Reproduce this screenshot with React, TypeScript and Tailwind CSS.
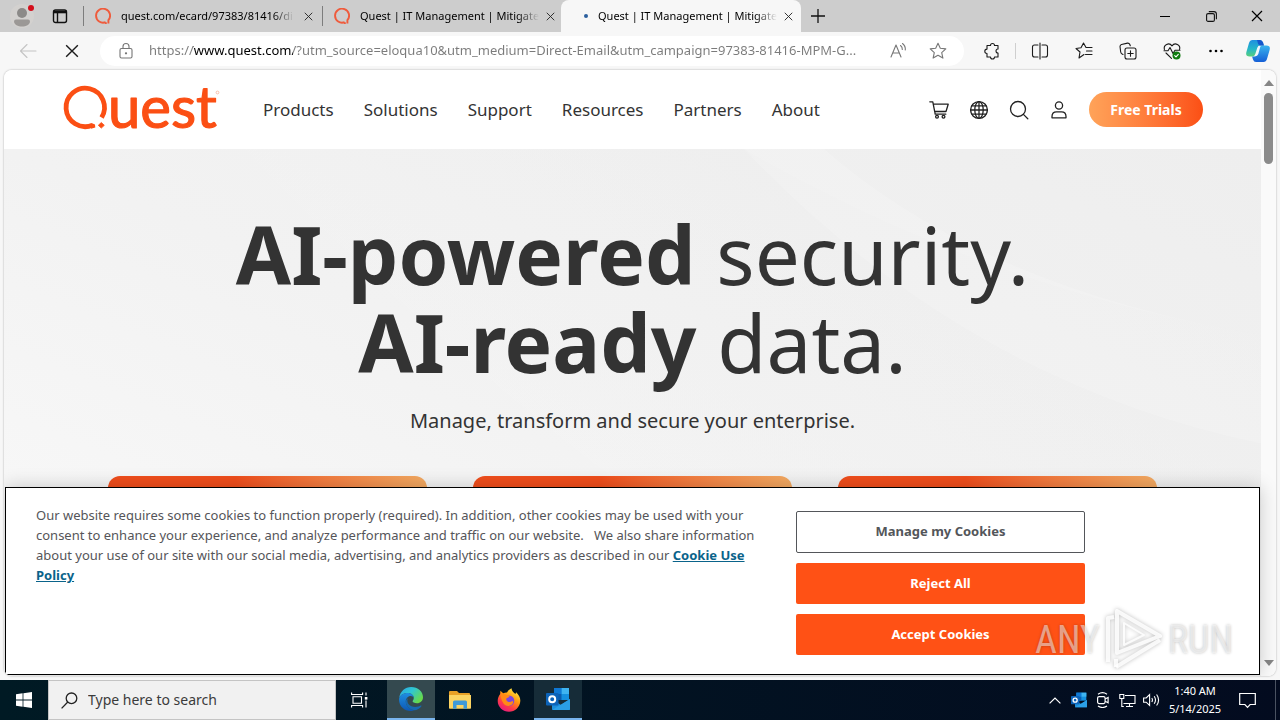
import type { ReactNode } from "react";

function QuestMark({ className }: { className?: string }) {
  return (
    <svg viewBox="0 0 16 16" className={className} fill="none" stroke="#ef5b3c" strokeWidth="1.9" aria-hidden="true">
      <path d="M10.6 14.2A7 7 0 1 1 13.4 12.2V15.6" />
      <path d="M9.8 15.2h2" />
    </svg>
  );
}

function CloseIcon({ className }: { className?: string }) {
  return (
    <svg viewBox="0 0 12 12" className={className} fill="none" stroke="currentColor" strokeWidth="1.2" aria-hidden="true">
      <path d="M1 1l10 10M11 1L1 11" />
    </svg>
  );
}

function Line({ children, className = "size-5" }: { children: ReactNode; className?: string }) {
  return (
    <svg
      viewBox="0 0 20 20"
      className={className}
      fill="none"
      stroke="currentColor"
      strokeWidth="1.1"
      strokeLinecap="round"
      strokeLinejoin="round"
      aria-hidden="true"
    >
      {children}
    </svg>
  );
}

function Tab({ title, active, icon }: { title: string; active?: boolean; icon: ReactNode }) {
  return (
    <div
      className={
        active
          ? "flex h-8 w-60 items-center rounded-t-lg bg-[#f7f7f7] pr-1.5 pl-[17px]"
          : "flex h-8 w-[238px] items-center pr-1 pl-[11px]"
      }
    >
      <span className="flex w-4 shrink-0 items-center justify-center">{icon}</span>
      <button
        type="button"
        className={
          active
            ? "ml-1 flex-1 bg-[linear-gradient(90deg,#000_88%,#0000_100%)] bg-clip-text text-left text-[11px] whitespace-nowrap text-transparent"
            : "ml-[10px] flex-1 bg-[linear-gradient(90deg,#000_88%,#0000_100%)] bg-clip-text text-left text-[11px] whitespace-nowrap text-transparent"
        }
      >
        {title}
      </button>
      <button type="button" aria-label="Close tab" className="ml-1 flex size-5 items-center justify-center text-[#222]">
        <CloseIcon className="size-[9px]" />
      </button>
    </div>
  );
}

function TabStrip() {
  return (
    <div className="flex h-8 shrink-0 items-center bg-[#cdcdcd]">
      <button type="button" aria-label="Profile" className="ml-2.5 size-6">
        <svg viewBox="0 0 24 24" className="size-6" aria-hidden="true">
          <circle cx="12" cy="12" r="12" fill="#d3d1cf" />
          <circle cx="12" cy="9" r="5" fill="#8c8a88" />
          <path d="M4 17.6q0-2 2-2h12q2 0 2 2c0 3-4 5-8 5s-8-2-8-5z" fill="#9b9896" />
          <circle cx="21" cy="4" r="3" fill="#d40f1c" />
        </svg>
      </button>
      <button type="button" aria-label="Tab actions" className="ml-4 flex size-5 items-center justify-center">
        <svg viewBox="0 0 16 16" className="size-4" fill="none" stroke="#111" strokeWidth="1.4" aria-hidden="true">
          <rect x="1.5" y="2" width="13" height="12.5" rx="2" />
          <path d="M1.5 4h13" strokeWidth="2.6" />
          <path d="M5.5 4v10" />
        </svg>
      </button>
      <div className="ml-[13px] h-5 w-px bg-[#7d7d7d]" />
      <Tab title="quest.com/ecard/97383/81416/di" icon={<QuestMark className="size-4" />} />
      <div className="h-5 w-px bg-[#7d7d7d]" />
      <Tab title="Quest | IT Management | Mitigate" icon={<QuestMark className="size-4" />} />
      <Tab active title="Quest | IT Management | Mitigate" icon={<span className="size-1 rounded-full bg-[#2b5f9e]" />} />
      <button type="button" aria-label="New tab" className="ml-[7px] flex size-5 items-center justify-center">
        <svg viewBox="0 0 14 14" className="size-3.5" stroke="#111" strokeWidth="1.3" aria-hidden="true">
          <path d="M7 0v14M0 7h14" />
        </svg>
      </button>
      <div className="ml-auto flex">
        <button type="button" aria-label="Minimize" className="flex h-8 w-[46px] items-center justify-center">
          <span className="h-px w-2.5 bg-black" />
        </button>
        <button type="button" aria-label="Restore" className="flex h-8 w-[46px] items-center justify-center">
          <svg viewBox="0 0 11 11" className="size-[11px]" fill="none" stroke="#111" strokeWidth="1.1" aria-hidden="true">
            <rect x="0.6" y="2.6" width="7.8" height="7.8" rx="1.5" />
            <path d="M2.8.6h5.2q2.4 0 2.4 2.4v5.2" />
          </svg>
        </button>
        <button type="button" aria-label="Close" className="flex h-8 w-[46px] items-center justify-center">
          <CloseIcon className="size-3" />
        </button>
      </div>
    </div>
  );
}

function ToolButton({ label, children }: { label: string; children: ReactNode }) {
  return (
    <button type="button" aria-label={label} className="flex h-8 w-11 items-center justify-center text-[#1b1b1b]">
      {children}
    </button>
  );
}

function Toolbar() {
  return (
    <div className="flex h-[38px] shrink-0 items-center bg-[#f7f7f7] pl-1.5">
      <button type="button" aria-label="Back" className="flex h-8 w-11 items-center justify-center text-[#c4c4c4]">
        <Line>
          <path d="M18 10H2.5M9 3.500L2.500 10l6.500 6.500" />
        </Line>
      </button>
      <ToolButton label="Stop">
        <CloseIcon className="size-3.5" />
      </ToolButton>
      <div className="ml-1.5 flex h-[30px] flex-1 items-center rounded-full bg-white pl-4 text-[#767676]">
        <Line>
          <rect x="4" y="7.5" width="12" height="9.500" rx="1.500" />
          <path d="M7 7.500V5.500a3 3 0 0 1 6 0v2" />
          <circle cx="10" cy="12.300" r=".6" fill="currentColor" />
        </Line>
        <input
          type="text"
          aria-label="Address"
          readOnly
          className="ml-[13px] min-w-0 flex-1 bg-[linear-gradient(90deg,#7b7b7b_44px,#000_44px,#000_144px,#7b7b7b_144px)] bg-clip-text text-[13px] text-transparent outline-none"
          value="https://www.quest.com/?utm_source=eloqua10&utm_medium=Direct-Email&utm_campaign=97383-81416-MPM-G..."
        />
        <button type="button" aria-label="Read aloud" className="flex h-7 w-10 items-center justify-center">
          <Line>
            <path d="M3 16L8 4l5 12M4.800 12h6.500M12.500 4.500q2 1.500 1.800 4M14.500 2.500q3.200 2.500 2.800 6.500" />
          </Line>
        </button>
        <button type="button" aria-label="Add to favorites" className="mr-1.5 flex h-7 w-10 items-center justify-center">
          <Line>
            <path d="M10 2.200l2.300 5.100 5.500.6-4.100 3.700 1.200 5.500L10 14.300l-4.900 2.800 1.200-5.500-4.100-3.700 5.500-.6z" />
          </Line>
        </button>
      </div>
      <div className="ml-1.5 flex items-center">
        <ToolButton label="Extensions">
          <Line>
            <path d="M7 4.500h1.500a2 2 0 0 1 4 0H16V8a2 2 0 0 0 0 4v4h-3.500a2 2 0 0 1-4 0H5v-3.500a2.200 2.200 0 0 1 0-4.400V4.500z" />
          </Line>
        </ToolButton>
        <div className="mr-0.5 ml-px h-4 w-px bg-[#cfcfcf]" />
        <ToolButton label="Split screen">
          <Line>
            <path d="M10 2v16M8 4H4.500Q2.500 4 2.500 6v8q0 2 2 2H8M12 4h3.500q2 0 2 2v8q0 2-2 2H12" />
          </Line>
        </ToolButton>
        <ToolButton label="Favorites">
          <Line>
            <path d="M10 13.500l-5 3.500 1-6L2 7.500l5-.8L9.500 2 12 6.500h6M12.500 10H18M11.500 13.500H18" />
          </Line>
        </ToolButton>
        <ToolButton label="Collections">
          <Line>
            <rect x="7" y="7" width="11" height="11" rx="2" />
            <path d="M12.500 9.800v5.400M9.800 12.500h5.400M5 13.500l-.9-.4Q3 12.600 2.700 11L2 5.500Q2 4 3.500 3.500l6-1.400q1.600-.2 2.200 1.200l.6 1.500" />
          </Line>
        </ToolButton>
        <ToolButton label="Browser essentials">
          <Line>
            <path d="M2.400 8.500C1.200 4 7 .8 10 4.800c3-4 8.800-.8 7.600 3.700M4 12l5.500 5.300M2 9.800h4l2-3.300 3 6 2-3.200h5" />
            <circle cx="14.500" cy="14.500" r="4" fill="#107c10" stroke="none" />
            <path d="M12.700 14.600l1.300 1.200 2.300-2.500" stroke="#fff" />
          </Line>
        </ToolButton>
        <ToolButton label="Settings and more">
          <svg viewBox="0 0 16 4" className="h-1 w-4" aria-hidden="true">
            <circle cx="2.500" cy="2" r="1.300" />
            <circle cx="8" cy="2" r="1.300" />
            <circle cx="13.500" cy="2" r="1.300" />
          </svg>
        </ToolButton>
        <button type="button" aria-label="Copilot" className="mr-2.5 ml-2 size-6">
          <svg viewBox="0 0 24 24" className="size-6" aria-hidden="true">
            <defs>
              <linearGradient id="cpA" x1="0" y1="0" x2="0" y2="1">
                <stop offset="0" stopColor="#1f8fe0" />
                <stop offset=".55" stopColor="#25b7c8" />
                <stop offset="1" stopColor="#58cf7c" />
              </linearGradient>
              <linearGradient id="cpB" x1="0" y1="0" x2="0" y2="1">
                <stop offset="0" stopColor="#39b4ee" />
                <stop offset="1" stopColor="#155fd6" />
              </linearGradient>
            </defs>
            <path d="M6.500 1H14q2.200 0 3 2.500l.9 3H14q-2 0-2.700 2.200L9.300 15Q8.600 17.500 6 17.500H3.500Q-.8 17.500.4 13L3 4Q3.900 1 6.500 1z" fill="url(#cpA)" />
            <path d="M17.500 23H10q-2.200 0-3-2.500l-.9-3H8.500q2 0 2.700-2.200L13.200 9q.7-2.500 3.300-2.500h4q4.300 0 3.100 4.500L21 20q-.9 3-3.500 3z" fill="url(#cpB)" />
            <path d="M11 1h3q2.200 0 3 2.500l.9 3H14q-1.200 0-2-2z" fill="#1457cc" />
            <path d="M10.200 16l2-7q.8-2 2.300-2l-2.200 8q-.6 2-2.900 2.200z" fill="#eef7ff" />
          </svg>
        </button>
      </div>
    </div>
  );
}

function QuestLogo() {
  return (
    <a href="#home" aria-label="Quest" className="block">
      <svg viewBox="0 0 158 48" className="h-12 w-[158px] overflow-visible" aria-hidden="true">
        <path d="M37.600 31.500A19.200 19.200 0 1 0 28.500 39.200" fill="none" stroke="#fb4f14" strokeWidth="4.800" />
        <path d="M27.500 37l3.500 1.500.3 3-4.300 1.200z" fill="#fb4f14" />
        <path d="M37.300 36.500l3 2.800-3 2.800-3-2.800z" fill="#fb4f14" stroke="#fb4f14" strokeWidth=".8" strokeLinejoin="round" />
        <text
          x="44"
          y="42"
          fontSize="58"
          fontFamily="Lato, sans-serif"
          fill="#fb4f14"
          stroke="#fb4f14"
          strokeWidth="1.200"
          strokeLinejoin="round"
        >
          uest
        </text>
        <circle cx="153.500" cy="6.500" r="1.400" fill="none" stroke="#f6b49a" strokeWidth=".8" />
      </svg>
    </a>
  );
}

const navItems = ["Products", "Solutions", "Support", "Resources", "Partners", "About"];

function SiteHeader() {
  return (
    <header className="flex h-[79px] items-center bg-white pr-[58px] pl-[60px]">
      <QuestLogo />
      <nav className="ml-[41px] flex gap-[30px] text-[17px] text-[#333]">
        {navItems.map((item) => (
          <a key={item} href={`#${item.toLowerCase()}`}>
            {item}
          </a>
        ))}
      </nav>
      <div className="ml-auto flex gap-5 text-[#222]">
        <button type="button" aria-label="Cart">
          <Line>
            <path d="M.8 1.800h3l2.400 12.400h10.600M4.500 4.200h14.700L17 11.500H5.600" strokeWidth="1.300" />
            <circle cx="8" cy="16.800" r="1.400" strokeWidth="1.300" />
            <circle cx="14.500" cy="16.800" r="1.400" strokeWidth="1.300" />
          </Line>
        </button>
        <button type="button" aria-label="Language">
          <Line>
            <circle cx="10" cy="10" r="8.400" strokeWidth="1.400" />
            <ellipse cx="10" cy="10" rx="4.200" ry="8.400" strokeWidth="1.300" />
            <path d="M10 1.600v16.800M1.600 10h16.800M2.900 5.800h14.200M2.900 14.200h14.200" strokeWidth="1.300" />
          </Line>
        </button>
        <button type="button" aria-label="Search">
          <Line>
            <circle cx="9" cy="9" r="7.500" strokeWidth="1.300" />
            <path d="M14.400 14.400L18.800 18.800" strokeWidth="1.300" />
          </Line>
        </button>
        <button type="button" aria-label="Account">
          <Line>
            <circle cx="10" cy="5.500" r="3.600" strokeWidth="1.300" />
            <path d="M3 17.800v-1.300Q3 11.800 7.500 11.800h5q4.500 0 4.500 4.700v1.300z" strokeWidth="1.300" />
          </Line>
        </button>
      </div>
      <a
        href="#trials"
        className="ml-5 flex h-[35px] w-[114px] items-center justify-center rounded-full bg-linear-to-r from-[#ffa359] to-[#fb4f14] text-sm font-bold text-white"
      >
        Free Trials
      </a>
    </header>
  );
}

function Hero() {
  return (
    <main className="relative flex-1 overflow-hidden bg-linear-to-tr from-[#fafafa] via-[#f2f2f2] to-[#eeeeee] text-[#333]">
      <svg viewBox="0 0 1257 340" preserveAspectRatio="none" className="absolute inset-0 h-full w-full" aria-hidden="true">
        <defs>
          <linearGradient id="wave" x1="0" y1="1" x2="1" y2="0">
            <stop offset="0" stopColor="#fff" stopOpacity=".1" />
            <stop offset="1" stopColor="#e6e6e6" stopOpacity=".4" />
          </linearGradient>
        </defs>
        <path d="M240 0Q520 190 900 340H1257V120Q980 90 740 0z" fill="url(#wave)" />
        <path d="M740 0Q960 150 1257 190V120Q980 90 820 0z" fill="#fff" fillOpacity=".15" />
      </svg>
      <div className="relative flex flex-col items-center pt-[61px]">
        <h1 className="text-center text-[80px] leading-[88px]">
          <strong className="font-bold">AI-powered</strong> security.
          <br />
          <strong className="font-bold">AI-ready</strong> data.
        </h1>
        <p className="mt-[19px] text-xl leading-8">Manage, transform and secure your enterprise.</p>
        <div className="mt-[39px] grid w-full grid-cols-3 gap-[46px] px-[104px]">
          {[0, 1, 2].map((card) => (
            <div key={card} className="h-40 rounded-t-xl bg-linear-to-r from-[#f04e1c] from-40% to-[#f3aa62]" />
          ))}
        </div>
      </div>
    </main>
  );
}

function CookieBanner() {
  return (
    <section
      aria-label="Cookie consent"
      className="absolute inset-x-px bottom-px flex border border-black bg-white pt-[23px] pb-[19px] pl-[30px] shadow-[0_0_18px_rgba(0,0,0,0.2)]"
    >
      <p className="-mt-1.5 w-[722px] text-[13px] leading-5 text-[#555559]">
        Our website requires some cookies to function properly (required). In addition, other cookies may be used with your
        consent to enhance your experience, and analyze performance and traffic on our website. &nbsp; We also share information
        about your use of our site with our social media, advertising, and analytics providers as described in our{" "}
        <a href="#cookies" className="font-bold text-[#0a638a] underline">
          Cookie Use Policy
        </a>
      </p>
      <div className="ml-[38px] flex w-[289px] flex-col gap-2.5 text-[13px] font-bold">
        <button type="button" className="h-[42px] rounded-xs border border-[#53565a] text-[#53565a]">
          Manage my Cookies
        </button>
        <button type="button" className="h-[41px] rounded-xs bg-[#ff5115] text-white">
          Reject All
        </button>
        <button type="button" className="h-[41px] rounded-xs bg-[#ff5115] text-white">
          Accept Cookies
        </button>
      </div>
    </section>
  );
}

function Watermark() {
  return (
    <div className="pointer-events-none absolute right-[43px] bottom-1 flex items-center gap-1 font-['Liberation_Sans_Narrow','Roboto_Condensed','Liberation_Sans',sans-serif] text-[38px] leading-none text-white/50 [text-shadow:0_0_3px_rgba(0,0,0,0.25)]">
      <span>ANY</span>
      <svg viewBox="0 0 60 64" className="h-16 w-[60px] drop-shadow-[0_0_2px_rgba(0,0,0,0.3)]" fill="none" stroke="#fff" strokeOpacity=".85" strokeWidth="4" strokeLinejoin="round" aria-hidden="true">
        <path d="M4 54V10l6-1M13 3v42L56 28z" />
        <path d="M20 15v22l20-10z" strokeWidth="2" />
        <path d="M12 59L56 32" />
        <path d="M12 59v-8" />
      </svg>
      <span>RUN</span>
    </div>
  );
}

function ScrollBar() {
  return (
    <div className="flex w-[15px] flex-col items-center bg-[#fafafa] pt-2.5 pb-2.5">
      <svg viewBox="0 0 10 6" className="h-1.5 w-2.5" fill="#868686" aria-hidden="true">
        <path d="M5 0l5 6H0z" />
      </svg>
      <div className="mt-[7px] h-[71px] w-[9px] rounded-full bg-[#8b8b8b]" />
      <svg viewBox="0 0 10 6" className="mt-auto h-1.5 w-2.5" fill="#868686" aria-hidden="true">
        <path d="M5 6l5-6H0z" />
      </svg>
    </div>
  );
}

function OutlookIcon({ className }: { className?: string }) {
  return (
    <svg viewBox="0 0 24 24" className={className} aria-hidden="true">
      <path d="M8 1h15v12H8z" fill="#1490df" />
      <path d="M15.500 1H23v6h-7.500z" fill="#3fb4f0" />
      <path d="M8 1h7.500v6H8z" fill="#0f78d4" />
      <path d="M8 7h7.500v6H8z" fill="#0a5cad" />
      <path d="M6 12l9 6 9-6v10q0 1-1 1H7q-1 0-1-1z" fill="#1c8fdc" />
      <path d="M6 23L24 12v10q0 1-1 1z" fill="#2b9fe6" />
      <rect x="0" y="6" width="12.500" height="12.500" rx="1" fill="#0c63b8" />
      <circle cx="6.200" cy="12.200" r="3" fill="none" stroke="#fff" strokeWidth="2" />
    </svg>
  );
}

function Taskbar() {
  return (
    <footer className="flex h-10 shrink-0 bg-linear-to-r from-[#001a24] to-[#030b1f] text-white">
      <button type="button" aria-label="Start" className="flex w-12 items-center justify-center">
        <svg viewBox="0 0 16 16" className="size-4" fill="#fff" aria-hidden="true">
          <path d="M0 2.200L6.600 1.300v6.300H0zM7.400 1.200L16 0v7.600H7.400zM0 8.400h6.600v6.300L0 13.800zM7.400 8.400H16V16l-8.600-1.200z" />
        </svg>
      </button>
      <label className="flex w-72 items-center border border-[#c4c4c4] bg-[#f1f1f1] pl-3 text-[#222]">
        <svg viewBox="0 0 17 17" className="size-[17px]" fill="none" stroke="#222" strokeWidth="1.300" aria-hidden="true">
          <circle cx="10.500" cy="6.300" r="5.300" />
          <path d="M6.800 10L.6 16.400" />
        </svg>
        <input
          type="text"
          aria-label="Type here to search"
          placeholder="Type here to search"
          className="ml-2.5 min-w-0 flex-1 bg-transparent text-sm outline-none placeholder:text-[#3b3b3b]"
        />
      </label>
      <button type="button" aria-label="Task view" className="flex w-[51px] items-center justify-center pr-1">
        <svg viewBox="0 0 17 16" className="h-4 w-[17px]" fill="none" stroke="#fff" strokeWidth="1.100" aria-hidden="true">
          <path d="M.6.500v2h11v-2M.6 15.500v-2h11v2M2 4.800h8.500v6.400H2zM15 .5v3M15 8.500v7" />
          <path d="M13.800 5h2.600v2.600h-2.600z" fill="#fff" stroke="none" />
        </svg>
      </button>
      <button type="button" aria-label="Microsoft Edge" className="flex w-12 items-center justify-center border-b-2 border-[#7ab5ee] bg-[#34494f]">
        <svg viewBox="0 0 24 24" className="size-6" aria-hidden="true">
          <defs>
            <linearGradient id="edgeTop" x1="0" y1="0" x2="1" y2=".6">
              <stop offset="0" stopColor="#2aa5e4" />
              <stop offset=".5" stopColor="#2fc6d3" />
              <stop offset="1" stopColor="#67d94a" />
            </linearGradient>
            <linearGradient id="edgeSide" x1="0" y1="0" x2="0" y2="1">
              <stop offset="0" stopColor="#1f8ee0" />
              <stop offset="1" stopColor="#0d58b5" />
            </linearGradient>
          </defs>
          <path d="M.2 11C1 4.500 6 0 12.200 0 19 0 24 4.800 24 10.200c0 3.600-2.700 6-6 6-2.800 0-4.400-1.200-4.400-2 0-.6 1.200-1.200 1.200-3.400 0-2.600-2.600-4.900-6.300-4.900C4.200 5.900.9 8.500.2 11z" fill="url(#edgeTop)" />
          <path d="M.1 11.500C1 8 4.500 5.900 8.500 5.900c3.700 0 6.300 2.300 6.300 4.900-.3-1-1.500-1.900-3-1.900-3 0-5 2.600-5 5.700 0 4.500 4 8 8.300 8.600Q13.500 24 12 24C5 24-.6 18.500.1 11.500z" fill="url(#edgeSide)" />
          <path d="M8.900 11.200c-2 4.800 2.200 8.800 7.200 8.800 2.600 0 4.400-.9 5.600-1.500.6-.3 1 .2.700.7-1.400 2-4.300 4-7.300 4-4.300-.6-8.300-4.100-8.300-8.600 0-1.300.8-2.700 2.100-3.400z" fill="#1769b0" />
        </svg>
      </button>
      <button type="button" aria-label="File Explorer" className="flex w-[49px] items-center justify-center">
        <svg viewBox="0 0 22 20" className="h-5 w-[22px]" aria-hidden="true">
          <path d="M0 2q0-1 1-1h7l2 2h10q1 0 1 1v3H0z" fill="#e9a126" />
          <path d="M0 5h22v13q0 .8-.8.8H.8Q0 18.800 0 18z" fill="#fcd462" />
          <path d="M4 18.800V12q0-1.500 1.500-1.500h11Q18 10.500 18 12v6.800h-3.500V15h-7v3.800z" fill="#3f9ad8" />
        </svg>
      </button>
      <button type="button" aria-label="Firefox" className="flex w-[50px] items-center justify-center">
        <svg viewBox="0 0 24 24" className="size-6" aria-hidden="true">
          <defs>
            <linearGradient id="fox" x1=".8" y1="0" x2=".2" y2="1">
              <stop offset="0" stopColor="#fff24a" />
              <stop offset=".4" stopColor="#ff980e" />
              <stop offset=".7" stopColor="#ff3b47" />
              <stop offset="1" stopColor="#e31587" />
            </linearGradient>
          </defs>
          <path d="M3.200 6l.2-3.300 2.800 2.600Q8 4.500 10 4.600 11.500 1.500 14.500.2c.2 3 2.300 4.300 4 5.900l.6-1.800C22 7 23.500 10 23.300 13 23 19 18 23.800 12 23.800S.7 19 .7 13c0-2.700 1-5 2.500-7z" fill="url(#fox)" />
          <circle cx="12" cy="12.800" r="5.300" fill="#7b46e0" />
          <path d="M3.500 6.500q3-1.500 5.300.5 1.500 0 4 .5-.5 2-3.300 2.700-1 2.800 2 3.800 2.500.3 4-1.200 1.500 1.500-.5 3.700-3 2.500-6.500.8Q4.500 15 3.500 6.500z" fill="#ff8a16" />
        </svg>
      </button>
      <button type="button" aria-label="Outlook" className="flex w-12 items-center justify-center border-b-2 border-[#7ab5ee] bg-[#162c38]">
        <OutlookIcon className="size-6" />
      </button>
      <div className="ml-auto flex items-center">
        <button type="button" aria-label="Show hidden icons" className="flex w-6 justify-center">
          <svg viewBox="0 0 12 7" className="h-[7px] w-3" fill="none" stroke="#fff" strokeWidth="1.200" aria-hidden="true">
            <path d="M.6 6.400L6 1l5.400 5.400" />
          </svg>
        </button>
        <span className="flex w-6 justify-center">
          <OutlookIcon className="size-4" />
        </span>
        <span className="flex w-6 justify-center">
          <svg viewBox="0 0 14 16" className="h-4 w-3.5" fill="none" stroke="#fff" strokeWidth="1.200" aria-hidden="true">
            <rect x="1.600" y="4.600" width="7.500" height="7" rx="1.500" />
            <path d="M9.100 7l3-1.500v5.200l-3-1.500M2 2.200Q6.500-.8 11 2.200M2 14Q6.500 17 11 14" />
          </svg>
        </span>
        <span className="flex w-6 justify-center">
          <svg viewBox="0 0 17 15" className="h-[15px] w-[17px]" fill="none" stroke="#fff" strokeWidth="1.100" aria-hidden="true">
            <path d="M6 2.500h10v8H4.500M10.500 10.500v3M7 13.500h7M.8 1.500h4v4h-4zM2.800 5.500v8h2" />
          </svg>
        </span>
        <span className="flex w-6 justify-center">
          <svg viewBox="0 0 17 14" className="h-3.5 w-[17px]" fill="none" stroke="#fff" strokeWidth="1.100" aria-hidden="true">
            <path d="M.6 5v4.200h2.600L6.600 12.500v-11L3.200 5zM8.800 5q1.300 2 0 4M11.200 3.200q2.600 3.800 0 7.600M13.600 1.500q4 5.500 0 11" />
          </svg>
        </span>
        <div className="w-16 text-center text-[11px] leading-[18px]">
          <div>1:40 AM</div>
          <div>5/14/2025</div>
        </div>
        <button type="button" aria-label="Notifications" className="mr-2 flex w-10 justify-center">
          <svg viewBox="0 0 17 17" className="size-[17px]" fill="none" stroke="#fff" strokeWidth="1.200" aria-hidden="true">
            <path d="M.7 1.500h15.600v11h-5.200l-2.600 2.800-2.600-2.800H.7z" />
          </svg>
        </button>
        <div className="h-10 w-[5px] border-l border-[#4a5261]" />
      </div>
    </footer>
  );
}

export default function App() {
  return (
    <div className="flex h-screen min-h-[560px] flex-col overflow-hidden bg-[#f7f7f7] font-['Noto_Sans',sans-serif]">
      <TabStrip />
      <Toolbar />
      <div className="relative mx-1 mb-1 flex min-h-0 flex-1 overflow-hidden rounded-lg bg-white shadow-[0_0_2px_rgba(0,0,0,0.35)]">
        <div className="relative flex min-w-0 flex-1 flex-col">
          <SiteHeader />
          <Hero />
          <CookieBanner />
        </div>
        <ScrollBar />
        <Watermark />
      </div>
      <Taskbar />
    </div>
  );
}
